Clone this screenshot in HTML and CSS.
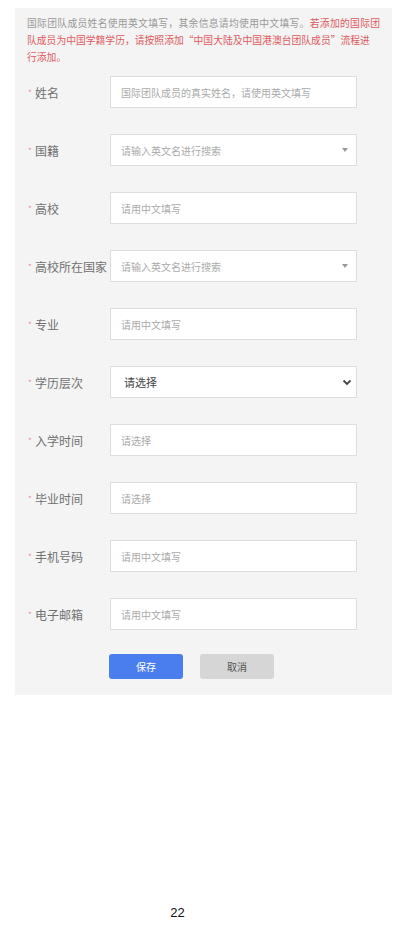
FILE: index.html
```html
<!DOCTYPE html>
<html lang="zh-CN">
<head>
    <meta charset="UTF-8">
    <meta name="viewport" content="width=device-width, initial-scale=1.0">
    <title>国际团队成员</title>
    <link rel="stylesheet" href="styles.css">
</head>
<body>
    <div class="page">
        <div class="panel">
            <p class="notice">
                <span class="first">国际团队成员姓名使用英文填写，其余信息请均使用中文填写。<span class="warn">若添加的国际团</span></span><br><span class="warn">队成员为中国学籍学历，请按照添加“中国大陆及中国港澳台团队成员”流程进<br>行添加。</span>
            </p>

            <div class="form">
                <div class="row">
                    <label class="label"><span class="star">*</span>姓名</label>
                    <input class="field" type="text" placeholder="国际团队成员的真实姓名，请使用英文填写">
                </div>
                <div class="row">
                    <label class="label"><span class="star">*</span>国籍</label>
                    <div class="combo">
                        <input class="field" type="text" placeholder="请输入英文名进行搜索">
                        <span class="caret"></span>
                    </div>
                </div>
                <div class="row">
                    <label class="label"><span class="star">*</span>高校</label>
                    <input class="field" type="text" placeholder="请用中文填写">
                </div>
                <div class="row">
                    <label class="label"><span class="star">*</span>高校所在国家</label>
                    <div class="combo">
                        <input class="field" type="text" placeholder="请输入英文名进行搜索">
                        <span class="caret"></span>
                    </div>
                </div>
                <div class="row">
                    <label class="label"><span class="star">*</span>专业</label>
                    <input class="field" type="text" placeholder="请用中文填写">
                </div>
                <div class="row">
                    <label class="label"><span class="star">*</span>学历层次</label>
                    <div class="combo">
                        <select class="field select">
                            <option>请选择</option>
                        </select>
                        <svg class="chevron" width="10" height="7" viewBox="0 0 10 7">
                            <path d="M1.5 1.5 L5 5 L8.5 1.5" fill="none" stroke="#444" stroke-width="1.8"/>
                        </svg>
                    </div>
                </div>
                <div class="row">
                    <label class="label"><span class="star">*</span>入学时间</label>
                    <input class="field" type="text" placeholder="请选择">
                </div>
                <div class="row">
                    <label class="label"><span class="star">*</span>毕业时间</label>
                    <input class="field" type="text" placeholder="请选择">
                </div>
                <div class="row">
                    <label class="label"><span class="star">*</span>手机号码</label>
                    <input class="field" type="text" placeholder="请用中文填写">
                </div>
                <div class="row">
                    <label class="label"><span class="star">*</span>电子邮箱</label>
                    <input class="field" type="text" placeholder="请用中文填写">
                </div>
            </div>

            <div class="actions">
                <button class="btn btn-save">保存</button>
                <button class="btn btn-cancel">取消</button>
            </div>
        </div>

        <div class="page-num">22</div>
    </div>
</body>
</html>
```

FILE: styles.css
```css
* {
    box-sizing: border-box;
    margin: 0;
    padding: 0;
}

body {
    font-family: "Noto Sans CJK SC", "Noto Sans", sans-serif;
    background-color: #FFFFFF;
    color: #333333;
}

.page {
    width: 403px;
    height: 929px;
    padding-top: 8px;
}

.panel {
    width: 377px;
    margin-left: 15px;
    background-color: #F4F4F4;
    padding: 7px 0 16px 12px;
}

.notice {
    font-size: 9.8px;
    line-height: 17px;
    color: #999999;
    white-space: nowrap;
    margin-bottom: 10px;
}

.notice .first {
    letter-spacing: 0.3px;
}

.notice .warn {
    color: #DD5A5E;
}

.form {
    display: flex;
    flex-direction: column;
    gap: 26px;
}

.row {
    display: flex;
    align-items: center;
    height: 32px;
}

.label {
    width: 83px;
    padding-left: 1px;
    font-size: 12px;
    color: #707070;
    white-space: nowrap;
    display: flex;
    align-items: center;
}

.star {
    color: #E58A92;
    font-size: 8px;
    width: 7px;
}

.field {
    width: 247px;
    height: 32px;
    border: 1px solid #DDDDDD;
    background-color: #FFFFFF;
    padding: 0 10px;
    font-family: inherit;
    font-size: 10px;
    color: #333333;
    outline: none;
}

.field::placeholder {
    color: #AAAAAA;
}

.combo {
    position: relative;
    width: 247px;
    height: 32px;
}

.caret {
    position: absolute;
    right: 9px;
    top: 14px;
    width: 0;
    height: 0;
    border-left: 3.5px solid transparent;
    border-right: 3.5px solid transparent;
    border-top: 4px solid #999999;
}

.select {
    appearance: none;
    -webkit-appearance: none;
    padding-left: 13px;
    font-size: 11px;
    color: #444444;
}

.chevron {
    position: absolute;
    right: 5px;
    top: 13px;
}

.actions {
    display: flex;
    gap: 17px;
    margin-top: 24px;
    padding-left: 82px;
}

.btn {
    width: 74px;
    height: 25px;
    border: none;
    border-radius: 3px;
    font-family: inherit;
    font-size: 10px;
    cursor: pointer;
}

.btn-save {
    background-color: #4A7EEF;
    color: #FFFFFF;
}

.btn-cancel {
    background-color: #D6D6D6;
    color: #555555;
}

.page-num {
    margin-top: 210px;
    text-align: center;
    padding-right: 48px;
    font-family: "Liberation Sans", Arial, sans-serif;
    font-size: 13px;
    line-height: 16px;
    color: #111111;
}
```
